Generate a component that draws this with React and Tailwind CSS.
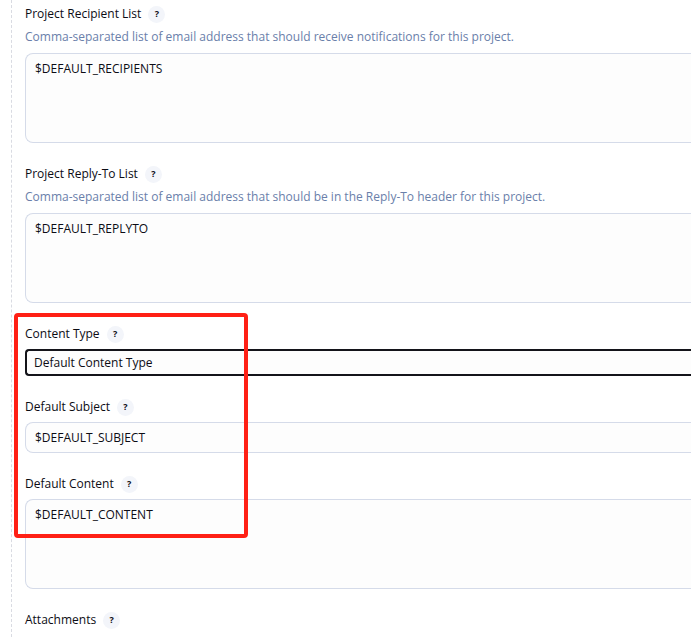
import React, { useState } from 'react'

const boxStyle =
  'block w-full border border-r-0 border-[#d5dbe9] rounded-l-lg bg-[#fdfdfd] px-[9px] text-xs leading-5 text-[#0c0c14] outline-none'

const FieldLabel = ({ id, text }) => (
  <div className="flex items-center gap-[7px] h-4">
    <label htmlFor={id} className="text-xs leading-4 text-[#0c0c14]">
      {text}
    </label>
    <button
      type="button"
      aria-label={`Help for ${text}`}
      className="flex items-center justify-center w-[17px] h-[17px] rounded-full bg-[#f3f5fa] text-[9px] leading-4 font-bold text-[#0c0c14]"
    >
      ?
    </button>
  </div>
)

const Description = ({ children }) => (
  <p className="mt-1 text-xs leading-[22px] text-[#6a80aa] whitespace-nowrap">{children}</p>
)

const App = () => {
  const [recipients, setRecipients] = useState('$DEFAULT_RECIPIENTS')
  const [replyTo, setReplyTo] = useState('$DEFAULT_REPLYTO')
  const [contentType, setContentType] = useState('default')
  const [subject, setSubject] = useState('$DEFAULT_SUBJECT')
  const [content, setContent] = useState('$DEFAULT_CONTENT')

  return (
    <div className="min-h-screen bg-white overflow-hidden pl-[11px] font-['Open_Sans','Noto_Sans',sans-serif]">
      <form className="flex flex-col gap-[23px] min-h-screen border-l border-dashed border-[#d9dbe2] pl-[13px] pt-[6px] pb-2">
        <div>
          <FieldLabel id="recipients" text="Project Recipient List" />
          <Description>
            Comma-separated list of email address that should receive notifications for this project.
          </Description>
          <textarea
            id="recipients"
            value={recipients}
            onChange={(e) => setRecipients(e.target.value)}
            className={`${boxStyle} mt-[5px] h-[90px] py-[5px] resize-none`}
          />
        </div>

        <div>
          <FieldLabel id="replyto" text="Project Reply-To List" />
          <Description>
            Comma-separated list of email address that should be in the Reply-To header for this project.
          </Description>
          <textarea
            id="replyto"
            value={replyTo}
            onChange={(e) => setReplyTo(e.target.value)}
            className={`${boxStyle} mt-[5px] h-[90px] py-[5px] resize-none`}
          />
        </div>

        {/* highlighted settings */}
        <div className="relative flex flex-col gap-[23px]">
          <div>
            <FieldLabel id="content-type" text="Content Type" />
            <select
              id="content-type"
              value={contentType}
              onChange={(e) => setContentType(e.target.value)}
              className="block appearance-none w-full h-[27px] mt-[7px] border-2 border-r-0 border-[#14141a] rounded-l-sm bg-[#fdfdfd] px-[7px] text-xs leading-5 text-[#0c0c14] outline-none"
            >
              <option value="default">Default Content Type</option>
              <option value="text">Plain Text (text/plain)</option>
              <option value="html">HTML (text/html)</option>
            </select>
          </div>

          <div>
            <FieldLabel id="subject" text="Default Subject" />
            <input
              id="subject"
              type="text"
              value={subject}
              onChange={(e) => setSubject(e.target.value)}
              className={`${boxStyle} mt-[7px] h-[31px]`}
            />
          </div>

          <div>
            <FieldLabel id="content" text="Default Content" />
            <textarea
              id="content"
              value={content}
              onChange={(e) => setContent(e.target.value)}
              className={`${boxStyle} mt-[7px] h-[90px] py-[5px] resize-none`}
            />
          </div>

          <div className="absolute -left-[11px] -top-[13px] bottom-[51px] w-[234px] border-4 border-[#ff2015] rounded-sm pointer-events-none" />
        </div>

        <FieldLabel id="attachments" text="Attachments" />
      </form>
    </div>
  )
}

export default App
